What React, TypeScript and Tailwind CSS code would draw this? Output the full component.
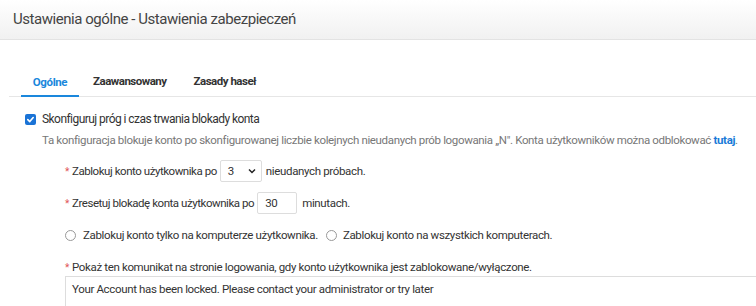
import React from "react";

export default function App() {
  const row = "flex items-center text-[11.5px] tracking-[-0.35px] text-[#333] whitespace-nowrap";
  return (
    <div className="w-[756px] h-[306px] overflow-hidden bg-white text-[#333]" style={{ fontFamily: "Roboto, 'Liberation Sans', sans-serif" }}>
      <div className="h-[40px] border-b border-[#e3e3e3] bg-gradient-to-b from-white to-[#f1f1f1] flex items-center pl-[13px]">
        <span className="text-[15px] tracking-[-0.45px] text-[#444]">Ustawienia ogólne - Ustawienia zabezpieczeń</span>
      </div>
      <div className="ml-[9px] mt-[30px] flex items-end border-b border-[#e6e6e6] h-[27px]">
        <div className="ml-[12px] w-[58px] h-full flex justify-center items-start pt-[3px] border-b-2 border-[#1a87dc] -mb-px">
          <span className="text-[11.5px] tracking-[-0.4px] font-bold text-[#1a87dc]">Ogólne</span>
        </div>
        <div className="ml-[14px] h-full flex items-start pt-[3px]">
          <span className="text-[11.5px] tracking-[-0.5px] font-bold text-[#333]">Zaawansowany</span>
        </div>
        <div className="ml-[27px] h-full flex items-start pt-[3px]">
          <span className="text-[11.5px] tracking-[-0.5px] font-bold text-[#333]">Zasady haseł</span>
        </div>
      </div>
      <div className="pl-[25px] pt-[14px]">
        <div className="flex items-center h-[16px]">
          <span className="w-[11px] h-[11px] rounded-[2px] bg-[#1a73d6] flex items-center justify-center">
            <svg width="9" height="9" viewBox="0 0 10 10"><path d="M2 5.2 L4.2 7.3 L8 2.8" stroke="white" strokeWidth="1.8" fill="none" strokeLinecap="round" strokeLinejoin="round" /></svg>
          </span>
          <span className="ml-[6px] text-[12px] tracking-[-0.55px] text-[#333]">Skonfiguruj próg i czas trwania blokady konta</span>
        </div>
        <div className="ml-[17px] mt-[5px] text-[11.5px] tracking-[-0.35px] text-[#777] whitespace-nowrap">
          Ta konfiguracja blokuje konto po skonfigurowanej liczbie kolejnych nieudanych prób logowania „N". Konta użytkowników można odblokować <span className="text-[#1a7ad8] font-bold">tutaj</span>.
        </div>
        <div className={`ml-[40px] mt-[11px] h-[22px] ${row}`}>
          <span className="text-[#e05555] mr-[3px] text-[10px]">*</span>
          <span className="tracking-[-0.45px]">Zablokuj konto użytkownika po</span>
          <div className="ml-[3px] w-[42px] h-[22px] border border-[#ddd] rounded-[2px] flex items-center justify-between pl-[7px] pr-[4px]">
            <span>3</span>
            <svg width="10" height="10" viewBox="0 0 10 10"><path d="M2 3.5 L5 6.5 L8 3.5" stroke="#222" strokeWidth="1.5" fill="none" /></svg>
          </div>
          <span className="ml-[4px]">nieudanych próbach.</span>
        </div>
        <div className={`ml-[40px] mt-[10px] h-[22px] ${row}`}>
          <span className="text-[#e05555] mr-[3px] text-[10px]">*</span>
          <span className="tracking-[-0.45px]">Zresetuj blokadę konta użytkownika po</span>
          <div className="ml-[3px] w-[40px] h-[22px] border border-[#ddd] rounded-[2px] flex items-center pl-[7px]">
            <span>30</span>
          </div>
          <span className="ml-[5px]">minutach.</span>
        </div>
        <div className={`ml-[40px] mt-[11px] h-[20px] ${row}`}>
          <span className="w-[11px] h-[11px] rounded-full border border-[#999]" />
          <span className="ml-[7px]">Zablokuj konto tylko na komputerze użytkownika.</span>
          <span className="ml-[8px] w-[11px] h-[11px] rounded-full border border-[#999]" />
          <span className="ml-[6px]">Zablokuj konto na wszystkich komputerach.</span>
        </div>
        <div className={`ml-[40px] mt-[14px] h-[16px] ${row}`}>
          <span className="text-[#e05555] mr-[3px] text-[10px]">*</span>
          <span>Pokaż ten komunikat na stronie logowania, gdy konto użytkownika jest zablokowane/wyłączone.</span>
        </div>
        <div className="ml-[40px] mt-[1px] w-[760px] h-[40px] border border-[#ddd] pl-[6px] pt-[4px] text-[11.5px] tracking-[-0.35px] text-[#333] whitespace-nowrap">
          Your Account has been locked. Please contact your administrator or try later
        </div>
      </div>
    </div>
  );
}
